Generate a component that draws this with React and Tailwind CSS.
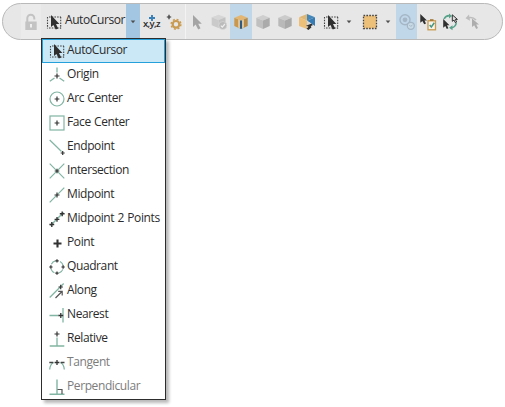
import React from 'react';

const TEAL = '#82b5a3';
const DARK = '#333333';

function Icon({ w = 16, h = 16, children, className = '' }) {
  return (
    <svg width={w} height={h} viewBox={`0 0 ${w} ${h}`} fill="none" className={`block shrink-0 ${className}`}>
      {children}
    </svg>
  );
}

function Plus({ x, y, r = 2, c = DARK, sw = 1.2 }) {
  return <path d={`M${x - r} ${y}H${x + r}M${x} ${y - r}V${y + r}`} stroke={c} strokeWidth={sw} />;
}

function SelectArrow() {
  return (
    <Icon>
      <path d="M3 3H15M3 14H15" stroke="#444" strokeWidth="1.1" strokeDasharray="1.6 1.1" />
      <path d="M1.5 3V14.5M14.7 3V14.5" stroke="#444" strokeWidth="1.1" strokeDasharray="1.6 1.1" />
      <path d="M5 1V13L7.4 10.9L9.8 15.6L12.2 14.4L10 10H13.4Z" fill="#2f2f2f" />
    </Icon>
  );
}

function Cube({ top, left, right, children }) {
  return (
    <Icon>
      <path d="M8 1L14.7 3.7L8 6.6L1.3 3.7Z" fill={top} />
      <path d="M1.3 3.7L8 6.6V15L1.3 12Z" fill={left} />
      <path d="M14.7 3.7L8 6.6V15L14.7 12Z" fill={right} />
      {children}
    </Icon>
  );
}

function Cell({ className = '', children }) {
  return <div className={`flex h-full shrink-0 items-center justify-center ${className}`}>{children}</div>;
}

function Caret() {
  return (
    <Icon w={6} h={4}>
      <path d="M.7 .5H5.3L3 3.3Z" fill="#505050" />
    </Icon>
  );
}

const ITEMS = [
  ['AutoCursor', null],
  ['Origin', <><path d="M8 .5V5.5M5.5 11L.8 14.2M10.5 11L15.2 14.2" stroke={TEAL} strokeWidth="1.3" /><Plus x={8} y={9} r={2.5} /></>],
  ['Arc Center', <><circle cx="8" cy="8" r="7" stroke={TEAL} strokeWidth="1.2" /><Plus x={8} y={8} r={2.4} /></>],
  ['Face Center', <><rect x="1" y="1" width="14" height="14" stroke={TEAL} strokeWidth="1.2" /><Plus x={8} y={8} r={2.4} /></>],
  ['Endpoint', <><path d="M.7 1L12.5 12.5" stroke={TEAL} strokeWidth="1.2" /><Plus x={13.7} y={14} r={2} /></>],
  ['Intersection', <><path d="M.7 .7L15.3 15.3M15.3 .7L.7 15.3" stroke={TEAL} strokeWidth="1.2" /><Plus x={8} y={8} r={2.3} /></>],
  ['Midpoint', <><path d="M15.3 .7L.7 15.3" stroke={TEAL} strokeWidth="1.2" /><Plus x={8} y={8} r={2.5} /></>],
  ['Midpoint 2 Points', <><path d="M14.5 1.5L1.5 14.5" stroke={TEAL} strokeWidth="1.4" /><Plus x={8} y={8.3} r={2.4} sw={1.3} /><Plus x={13.2} y={2.8} r={2.4} sw={1.4} /><Plus x={2.8} y={13.5} r={2.4} sw={1.4} /></>],
  ['Point', <Plus x={8.5} y={8.5} r={4} sw={2.1} />],
  ['Quadrant', <><circle cx="8" cy="8" r="6.3" stroke={TEAL} strokeWidth="1.2" strokeDasharray="5 4.896" strokeDashoffset="-2.45" /><Plus x={8} y={1.9} r={1.7} /><Plus x={8} y={14.1} r={1.7} /><Plus x={1.9} y={8} r={1.7} /><Plus x={14.1} y={8} r={1.7} /></>],
  ['Along', <><path d="M.7 14.5L14.7 .5" stroke={TEAL} strokeWidth="1.2" /><Plus x={11.7} y={4} r={2.2} /><path d="M6.5 15L13 8.5M9.2 8.3H13.2V12.5" stroke="#555" strokeWidth="1.2" /></>],
  ['Nearest', <><path d="M.5 8.5H9.5M14 1V15.5" stroke={TEAL} strokeWidth="1.3" /><Plus x={11.8} y={8.5} r={2.4} sw={1.3} /></>],
  ['Relative', <><path d="M.7 15H15.3M8 15V6.5" stroke={TEAL} strokeWidth="1.3" /><Plus x={8} y={3} r={2.5} /></>],
  ['Tangent', <><path d="M.7 14.5Q1 9.5 4.5 7.5M11.5 7.5Q15 9.5 15.3 14.5" stroke={TEAL} strokeWidth="1.3" /><path d="M.3 7.5H4.3M11.7 7.5H15.5" stroke="#444" strokeWidth="1.3" /><Plus x={8} y={7.5} r={2.4} sw={1.3} /></>],
  ['Perpendicular', <><path d="M.5 15.3H15.5M8 .5V15" stroke={TEAL} strokeWidth="1.4" /><path d="M8.5 10.5H13V15" stroke="#555" strokeWidth="1.2" /></>],
];

function Menu() {
  return (
    <div className="absolute left-[41px] top-[38px] w-[125px] border border-[#2d2d2d] bg-white shadow-[3px_3px_3px_rgba(0,0,0,0.28)]">
      {ITEMS.map(([label, art], i) => (
        <div
          key={label}
          className={`flex h-6 items-center pl-[7px] ${i === 0 ? 'bg-[#cbe8f6] outline outline-1 -outline-offset-1 outline-[#26a0da]' : ''} ${i > 12 ? 'text-[#7c7c7c]' : 'text-[#2b2b2b]'}`}
        >
          {art ? <Icon>{art}</Icon> : <SelectArrow />}
          <span className="ml-[2px] whitespace-nowrap pb-[2px] leading-[22px]">{label}</span>
        </div>
      ))}
    </div>
  );
}

function Toolbar() {
  return (
    <div className="ml-[2px] flex h-[37px] w-[501px] items-center rounded-full border border-[#b9b9b9] bg-[#e7e7e7] pl-[18px] text-[#2b2b2b]">
      <Cell className="w-[20px] bg-[#ebebeb]">
        <Icon w={14} h={18}>
          <path d="M3.3 9V5.2a3.5 3.5 0 0 1 7 0V6.5" stroke="#c3c3c3" strokeWidth="2" />
          <path d="M1.3 8.5H12.7V17H1.3Z" fill="#c3c3c3" />
          <path d="M7 11V14.5" stroke="#eee" strokeWidth="2" />
        </Icon>
      </Cell>
      <Cell className="ml-[3px] w-[20px]"><SelectArrow /></Cell>
      <Cell className="w-[62px]"><span className="whitespace-nowrap pb-[3px]">AutoCursor</span></Cell>
      <Cell className="w-[14px] bg-[#a3c7e2]"><Caret /></Cell>
      <Cell className="w-[23px] flex-col">
        <Icon w={8} h={6}>
          <Plus x={4} y={3} r={3} c="#397fb5" sw={1.9} />
        </Icon>
        <span className="-mt-[2px] text-[9.5px] font-semibold leading-[10px] tracking-[-0.6px]">x,y,z</span>
      </Cell>
      <Cell className="w-[22px]">
        <Icon w={16} h={18}>
          <Plus x={3} y={4} r={2.2} />
          <circle cx="10" cy="11.3" r="3.3" stroke="#c99b50" strokeWidth="2.2" />
          <circle cx="10" cy="11.3" r="4.9" stroke="#c99b50" strokeWidth="1.4" strokeDasharray="2 1.85" />
        </Icon>
      </Cell>
      <Cell className="w-[23px] border-l border-[#f3f3f3]">
        <Icon><path d="M4 1V13L6.6 10.6L9.2 15.4L11.5 14.3L9.2 9.8H12.8Z" fill="#a4a4a4" /></Icon>
      </Cell>
      <Cell className="w-[22px]">
        <Icon>
          <path d="M7.5 .8L14.5 3.2L7.5 6L.7 3.2Z" fill="#d6d6d6" />
          <path d="M.7 3.2L7.5 6V14L.7 11.3Z" fill="#cacaca" />
          <path d="M14.5 3.2L7.5 6V14L14.5 11.3Z" fill="#c2c2c2" />
          <circle cx="11.8" cy="11.5" r="4" fill="#bbbbbb" stroke="#dcdcdc" strokeWidth=".6" />
          <path d="M9.8 11.6L11.3 13.1L13.9 10" stroke="#eee" strokeWidth="1.2" />
        </Icon>
      </Cell>
      <Cell className="w-[22px] bg-[#bfd7e9]">
        <Cube top="#e3b773" left="#c9984c" right="#b58947">
          <path d="M5 5.3L8 6.6L11 5.3V13.6L8 15L5 13.6Z" fill="#dcc59c" />
          <path d="M8 6.5V14.8" stroke="#2c5c85" strokeWidth="2" />
        </Cube>
      </Cell>
      <Cell className="w-[22px]"><Cube top="#cfcfcf" left="#c0c0c0" right="#ababab" /></Cell>
      <Cell className="w-[22px]"><Cube top="#cbcbcb" left="#b9b9b9" right="#a9a9a9" /></Cell>
      <Cell className="w-[22px]">
        <Icon w={18} h={18}>
          <path d="M9 1L1 4.2L9 7.7Z" fill="#ddb778" />
          <path d="M9 1L17 4.2L9 7.7Z" fill="#4687b9" />
          <path d="M1 4.2L9 7.7V16L1 13Z" fill="#edc07a" />
          <path d="M17 4.2L9 7.7L17 13Z" fill="#367bb2" />
          <path d="M9 7.7L14.5 11.3L9 12.5Z" fill="#d5d9dc" />
          <path d="M8 12.7L13.8 10.6L14.8 12.2L12.7 13L13.5 14.3L10.5 17L8.5 15.8L10.5 13.7Z" fill="#303030" />
        </Icon>
      </Cell>
      <Cell className="ml-[2px] w-[22px]"><SelectArrow /></Cell>
      <Cell className="w-[14px]"><Caret /></Cell>
      <Cell className="ml-[3px] w-[22px]">
        <Icon>
          <rect x="1.5" y="1.5" width="13" height="13" fill="#edc07a" stroke="#444" strokeWidth="1.3" strokeDasharray="1.6 1.29" />
        </Icon>
      </Cell>
      <Cell className="w-[14px]"><Caret /></Cell>
      <Cell className="ml-px w-[21px] bg-[#bfd7e9]">
        <Icon w={18} h={18}>
          <circle cx="7" cy="6.8" r="5" stroke="#a5b7c6" strokeWidth="1.4" />
          <circle cx="7" cy="6.8" r="2.4" fill="#a5b7c6" />
          <circle cx="12.8" cy="12.8" r="3.5" fill="#c9dae7" stroke="#a5b7c6" strokeWidth="1.3" />
          <path d="M11.3 12L12.7 13.4L14.5 12" stroke="#a5b7c6" />
        </Icon>
      </Cell>
      <Cell className="w-[22px]">
        <Icon w={18} h={18}>
          <path d="M1.3 1V9.7L3.4 8L5.2 11.3L7 10.4L5.5 7.4H8Z" fill="#303030" />
          <rect x="9" y="7.8" width="7.5" height="9" fill="#f7f4ec" stroke="#c99b50" strokeWidth="1.3" />
          <path d="M11 7H14.5" stroke="#a07534" strokeWidth="1.6" />
          <path d="M10.7 12L12.3 14L15.3 9.8" stroke="#489783" strokeWidth="1.5" />
        </Icon>
      </Cell>
      <Cell className="w-[22px]">
        <Icon w={18} h={18}>
          <path d="M3 6A6 6 0 0 1 9 2.7M15.3 9.5A6.3 6.3 0 0 1 11 14.8" stroke="#58a18a" strokeWidth="1.6" />
          <path d="M8 .5L11 3L8 5.5ZM11.5 12.2L8 14.8L11.5 17.3Z" fill="#58a18a" />
          <path d="M2.2 6V14.8L4.3 13L5.8 16L7.4 15.2L6 12.2H8.5Z" fill="#303030" />
          <path d="M11.3 1.8V8.3L13 7.1L14.3 9.6L15.6 8.9L14.3 6.4H16.4Z" fill="#ddd" stroke="#303030" strokeWidth="1" />
        </Icon>
      </Cell>
      <Cell className="w-[23px]">
        <Icon w={18} h={18}>
          <path d="M3.5 5Q8.5 3.3 12 7" stroke="#bdbdbd" strokeWidth="1.6" />
          <path d="M5 1.5L1.5 5.3L6 7.8Z" fill="#bdbdbd" />
          <path d="M8 5.5V14L10.2 12.2L12.2 16L14 15.1L12.2 11.5H15Z" fill="#adadad" />
        </Icon>
      </Cell>
    </div>
  );
}

export default function App() {
  return (
    <div className="relative h-[407px] w-[505px] overflow-hidden bg-white pt-[3px] font-['Open_Sans','Noto_Sans',sans-serif] text-[12px] tracking-[-0.4px] [word-spacing:0.6px]">
      <Toolbar />
      <Menu />
    </div>
  );
}
